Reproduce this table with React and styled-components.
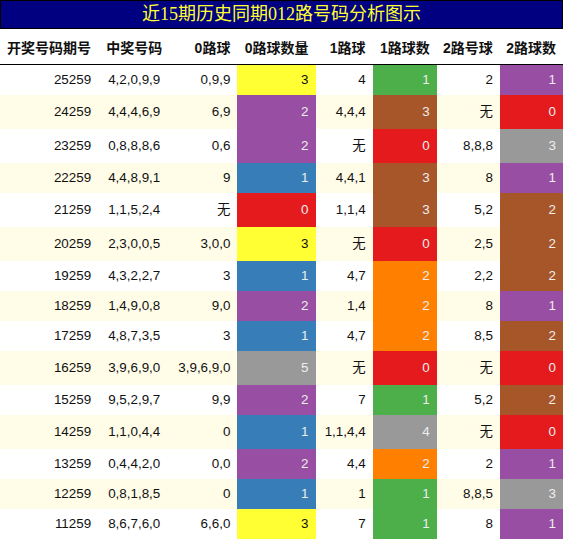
import React from 'react';
import styled, { createGlobalStyle } from 'styled-components';

const GlobalStyle = createGlobalStyle`
	body {
		margin: 0;
		background: #ffffff;
		font-family: 'Liberation Sans', 'Noto Sans CJK SC', sans-serif;
	}
`;

const C = {
	red: '#e41a1c',
	blue: '#377eb8',
	green: '#4daf4a',
	purple: '#984ea3',
	orange: '#ff7f00',
	yellow: '#ffff33',
	brown: '#a65628',
	grey: '#999999',
};

// colour of a count cell depends on its column
const zeroPalette = { 0: C.red, 1: C.blue, 2: C.purple, 3: C.yellow, 4: C.grey, 5: C.grey };
const onePalette = { 0: C.red, 1: C.green, 2: C.orange, 3: C.brown, 4: C.grey };
const twoPalette = { 0: C.red, 1: C.purple, 2: C.brown, 3: C.grey };

const headers = ['开奖号码期号', '中奖号码', '0路球', '0路球数量', '1路球', '1路球数', '2路号球', '2路球数'];
const widths = [98, 71, 68, 78, 57, 64, 63, 63];

const rows = [
	['25259', '4,2,0,9,9', '0,9,9', 3, '4', 1, '2', 1],
	['24259', '4,4,4,6,9', '6,9', 2, '4,4,4', 3, '无', 0],
	['23259', '0,8,8,8,6', '0,6', 2, '无', 0, '8,8,8', 3],
	['22259', '4,4,8,9,1', '9', 1, '4,4,1', 3, '8', 1],
	['21259', '1,1,5,2,4', '无', 0, '1,1,4', 3, '5,2', 2],
	['20259', '2,3,0,0,5', '3,0,0', 3, '无', 0, '2,5', 2],
	['19259', '4,3,2,2,7', '3', 1, '4,7', 2, '2,2', 2],
	['18259', '1,4,9,0,8', '9,0', 2, '1,4', 2, '8', 1],
	['17259', '4,8,7,3,5', '3', 1, '4,7', 2, '8,5', 2],
	['16259', '3,9,6,9,0', '3,9,6,9,0', 5, '无', 0, '无', 0],
	['15259', '9,5,2,9,7', '9,9', 2, '7', 1, '5,2', 2],
	['14259', '1,1,0,4,4', '0', 1, '1,1,4,4', 4, '无', 0],
	['13259', '0,4,4,2,0', '0,0', 2, '4,4', 2, '2', 1],
	['12259', '0,8,1,8,5', '0', 1, '1', 1, '8,8,5', 3],
	['11259', '8,6,7,6,0', '6,6,0', 3, '7', 1, '8', 1],
];

const App = () => {
	return (
		<>
			<GlobalStyle />
			<Wrapper>
				<Title>近15期历史同期012路号码分析图示</Title>
				<Table>
					<colgroup>
						{widths.map((w, i) => (
							<col key={i} style={{ width: w }} />
						))}
					</colgroup>
					<thead>
						<tr>
							{headers.map((h) => (
								<Th key={h}>{h}</Th>
							))}
						</tr>
					</thead>
					<tbody>
						{rows.map((r, i) => (
							<Row key={r[0]} $striped={i % 2 === 1} $tall={r.includes('无')}>
								<Td>{r[0]}</Td>
								<Td>{r[1]}</Td>
								<Td>{r[2]}</Td>
								<CountTd $bg={zeroPalette[r[3]]}>{r[3]}</CountTd>
								<Td>{r[4]}</Td>
								<CountTd $bg={onePalette[r[5]]}>{r[5]}</CountTd>
								<Td>{r[6]}</Td>
								<CountTd $bg={twoPalette[r[7]]}>{r[7]}</CountTd>
							</Row>
						))}
					</tbody>
				</Table>
			</Wrapper>
		</>
	);
};

export default App;

const Wrapper = styled.div`
	width: 563px;
`;

const Title = styled.div`
	height: 27px;
	line-height: 27px;
	background: #000080;
	border: 1px solid #000000;
	color: #ffff33;
	text-align: center;
	font-family: 'Liberation Serif', 'Noto Sans CJK SC', serif;
	font-size: 18px;
`;

const Table = styled.table`
	width: 563px;
	border-collapse: collapse;
	table-layout: fixed;
	font-size: 13.4px;
	color: #111111;
`;

const Th = styled.th`
	height: 35px;
	padding: 0 7px 0 0;
	text-align: right;
	font-size: 14px;
	font-weight: bold;
	white-space: nowrap;
	color: #111111;
	border-bottom: 1px solid #000000;
	&:first-child {
		text-align: left;
		padding-left: 7px;
	}
`;

const Row = styled.tr`
	height: ${(p) => (p.$tall ? 34 : 30)}px;
	background: ${(p) => (p.$striped ? '#fffce8' : '#ffffff')};
`;

const Td = styled.td`
	padding: 0 7px 0 0;
	line-height: 16px;
	text-align: right;
	white-space: nowrap;
	&:nth-child(2) {
		text-align: left;
		padding-left: 10px;
	}
`;

const CountTd = styled(Td)`
	background: ${(p) => p.$bg};
	color: ${(p) => (p.$bg === C.yellow ? '#111111' : '#eeeeee')};
`;
